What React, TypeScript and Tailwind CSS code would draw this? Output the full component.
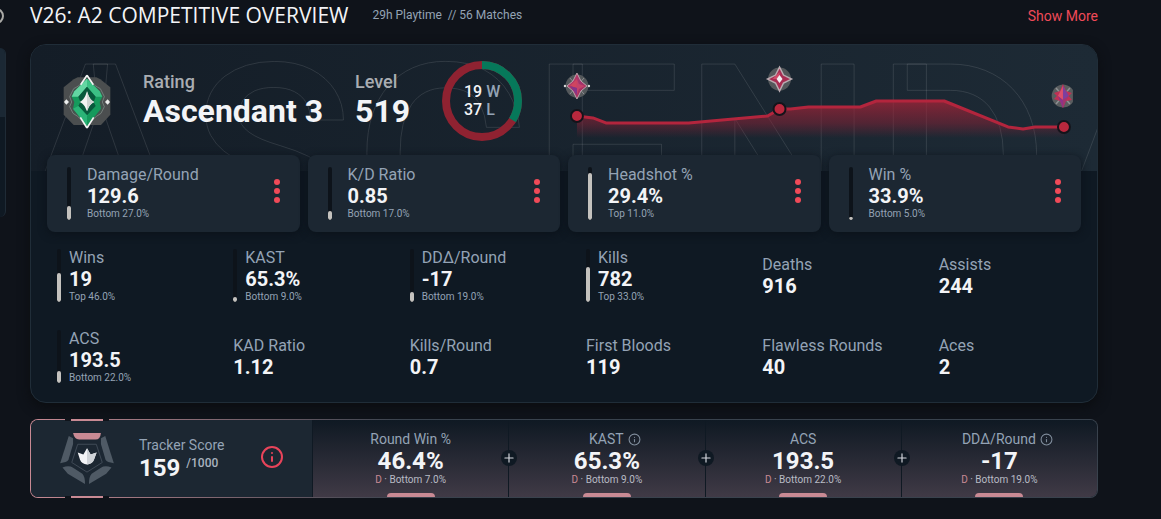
import React from "react";
import { Info, Plus } from "lucide-react";

type Stat = {
  label: string;
  value: string;
  rank?: string;
  percent?: number;
};

const mainStats: Stat[] = [
  { label: "Damage/Round", value: "129.6", rank: "Bottom 27.0%", percent: 27 },
  { label: "K/D Ratio", value: "0.85", rank: "Bottom 17.0%", percent: 17 },
  { label: "Headshot %", value: "29.4%", rank: "Top 11.0%", percent: 89 },
  { label: "Win %", value: "33.9%", rank: "Bottom 5.0%", percent: 5 },
];

const stats: Stat[] = [
  { label: "Wins", value: "19", rank: "Top 46.0%", percent: 54 },
  { label: "KAST", value: "65.3%", rank: "Bottom 9.0%", percent: 9 },
  { label: "DDΔ/Round", value: "-17", rank: "Bottom 19.0%", percent: 19 },
  { label: "Kills", value: "782", rank: "Top 33.0%", percent: 67 },
  { label: "Deaths", value: "916" },
  { label: "Assists", value: "244" },
  { label: "ACS", value: "193.5", rank: "Bottom 22.0%", percent: 22 },
  { label: "KAD Ratio", value: "1.12" },
  { label: "Kills/Round", value: "0.7" },
  { label: "First Bloods", value: "119" },
  { label: "Flawless Rounds", value: "40" },
  { label: "Aces", value: "2" },
];

const scoreParts = [
  { label: "Round Win %", value: "46.4%", rank: "Bottom 7.0%", info: false },
  { label: "KAST", value: "65.3%", rank: "Bottom 9.0%", info: true },
  { label: "ACS", value: "193.5", rank: "Bottom 22.0%", info: false },
  { label: "DDΔ/Round", value: "-17", rank: "Bottom 19.0%", info: true },
];

const RankBar = ({ percent }: { percent: number }) => (
  <div className="flex h-[53px] w-1 shrink-0 flex-col justify-end overflow-hidden rounded-full bg-[#0d131a]">
    <div
      className="w-full rounded-full bg-[#c4c2be]"
      style={{ height: `${percent}%` }}
    />
  </div>
);

const StatText = ({ stat }: { stat: Stat }) => (
  <div className="whitespace-nowrap">
    <div className="text-[16px] leading-[20px] text-[#94a3b5]">{stat.label}</div>
    <div className="text-[20px] leading-[22px] font-bold text-[#f3f4f7]">
      {stat.value}
    </div>
    {stat.rank && (
      <div className="text-[10px] leading-[14px] text-[#94a3b5]">
        {stat.rank}
      </div>
    )}
  </div>
);

const AscendantIcon = () => (
  <svg viewBox="68 51 144 168" className="h-14 w-12 shrink-0">
    <path
      d="M112 64 L168 64 L180 70 L210 94 L210 176 L182 207 L100 207 L70 176 L70 94 L100 70 Z"
      fill="#4b4e4f"
    />
    <path
      d="M140 58 C148 76 160 88 180 98 L192 122 L186 138 L192 152 L182 172 C164 182 150 196 140 216 C130 196 116 182 98 172 L88 152 L94 138 L88 122 L100 98 C120 88 132 76 140 58 Z"
      fill="#45534e"
      stroke="#8c9692"
      strokeWidth="2"
    />
    <path d="M140 68 L178 106 L186 122 L178 138 L182 158 L140 210 L98 158 L102 138 L94 122 L102 106 Z" fill="#159a5c" />
    <path d="M140 68 L102 106 L94 122 L114 122 L140 92 Z" fill="#63d6a2" />
    <path d="M140 68 L178 106 L186 122 L166 122 L140 92 Z" fill="#3cc085" />
    <path d="M140 92 L166 122 L160 138 L166 150 L140 178 L114 150 L120 138 L114 122 Z" fill="#08593c" />
    <path d="M140 210 L98 158 L114 150 L140 178 Z" fill="#2bb377" />
    <path d="M140 106 C146 124 150 132 162 138 C150 144 146 150 140 166 C134 150 130 144 118 138 C130 132 134 124 140 106 Z" fill="#f2f3f2" />
    <path d="M140 106 C146 124 150 132 162 138 C150 144 146 150 140 166 Z" fill="#cfd4d2" />
    <path d="M140 58 L159 86 M140 58 L121 86 M140 216 L160 184 M140 216 L120 184" stroke="#f2f4f3" strokeWidth="5" fill="none" />
    <path d="M78 130 L86 138 L78 146 L71 138 Z M202 130 L209 138 L202 146 L194 138 Z" fill="#eceeed" />
  </svg>
);

const TrackerEmblem = () => (
  <svg viewBox="176 340 168 160" className="h-[53px] w-14 shrink-0">
    <path d="M218 343 H302 Q300 363 286 363 H236 Q222 362 218 343 Z" fill="#c98a94" />
    <g fill="#4f5a65">
      <path d="M205 352 L218 359 V376 L204 424 Q200 432 179 434 Z" />
      <path d="M315 352 L302 359 V376 L316 424 Q320 432 341 434 Z" />
      <path d="M186 447 Q206 440 218 448 L246 466 Q254 474 254 497 L202 466 Z" />
      <path d="M334 447 Q314 440 302 448 L274 466 Q266 474 266 497 L318 466 Z" />
    </g>
    <path d="M232 377 H288 L306 432 L260 461 L214 432 Z" fill="none" stroke="#3f4a56" strokeWidth="3" />
    <path d="M260 389 L271 408 L289 402 L281 424 Q276 437 260 438 Q244 437 239 424 L232 402 L249 408 Z" fill="#f3f4f7" />
    <path d="M260 389 L271 408 L289 402 L281 424 Q276 437 260 438 Z" fill="#cfd3d8" />
  </svg>
);

const WinLossRing = () => (
  <div className="relative flex size-20 shrink-0 items-center justify-center">
    <svg viewBox="0 0 80 80" className="absolute inset-0">
      <circle cx="40" cy="40" r="36" fill="none" stroke="#8f2231" strokeWidth="8" />
      <circle
        cx="40"
        cy="40"
        r="36"
        fill="none"
        stroke="#06785a"
        strokeWidth="8"
        pathLength={100}
        strokeDasharray="33.9 100"
        transform="rotate(-90 40 40)"
      />
    </svg>
    <div className="relative text-[16px] leading-[18px] font-medium text-[#f3f4f7]">
      <div>
        19 <span className="text-[#94a3b5]">W</span>
      </div>
      <div>
        37 <span className="text-[#94a3b5]">L</span>
      </div>
    </div>
  </div>
);

const RatingChart = () => (
  <svg viewBox="0 0 544 112" className="h-28 min-w-0 flex-1">
    <defs>
      <linearGradient id="ratingFill" gradientUnits="userSpaceOnUse" x1="0" y1="56" x2="0" y2="93">
        <stop offset="0" stopColor="#a82438" stopOpacity="0.75" />
        <stop offset="0.6" stopColor="#8a2236" stopOpacity="0.5" />
        <stop offset="1" stopColor="#8a2236" stopOpacity="0" />
      </linearGradient>
      <linearGradient id="gem" x1="0" y1="0" x2="1" y2="1">
        <stop offset="0" stopColor="#d23a58" />
        <stop offset="0.5" stopColor="#a0356f" />
        <stop offset="1" stopColor="#b82b4c" />
      </linearGradient>
    </defs>
    <path
      d="M23 71 L39 73 L52 78 H135 L214 71 L226 64 H237 L255 62 H307 L323 56 H391 L455 82 L470 84 L482 82 H511 V93 H23 Z"
      fill="url(#ratingFill)"
    />
    <path
      d="M23 71 L39 73 L52 78 H135 L214 71 L226 64 H237 L255 62 H307 L323 56 H391 L455 82 L470 84 L482 82 H511"
      fill="none"
      stroke="#b3253d"
      strokeWidth="3"
      strokeLinejoin="round"
    />
    <g fill="#b9283d" stroke="#14131a" strokeWidth="2">
      <circle cx="23" cy="71" r="6" />
      <circle cx="226" cy="64" r="6" />
      <circle cx="511" cy="82" r="6" />
    </g>

    {/* rank markers above the points */}
    <g transform="translate(23 41)">
      <circle r="11.5" fill="#54585b" />
      <path d="M-7 -8 L7 8 M7 -8 L-7 8" stroke="#8d9092" strokeWidth="1" />
      <path d="M0 -13 L4 -5 L10 0 L4 5 L0 13 L-4 5 L-10 0 L-4 -5 Z" fill="url(#gem)" stroke="#b9a3ab" strokeWidth="1" />
      <path d="M0 -7 L2 -2 L8 0 L2 3 L0 9 Z" fill="#c4426a" />
      <path d="M0 -7 L-7 0 L0 2 Z" fill="#cf4560" />
      <path d="M0 9 L-7 0 L0 2 Z" fill="#85348a" />
      <circle cx="-12" r="1.2" fill="#d5d7d8" />
      <circle cx="12" r="1.2" fill="#d5d7d8" />
    </g>
    <g transform="translate(226 34)">
      <circle r="11.5" fill="#54585b" />
      <path d="M0 -12 L4 -4 L12 0 L4 4 L0 12 L-4 4 L-12 0 L-4 -4 Z" fill="#a82c52" stroke="#b9aab0" strokeWidth="1.5" />
      <path d="M0 -7 L-7 0 L0 0 Z" fill="#d14a68" />
      <path d="M0 -4 L3 0 L0 4 L-3 0 Z" fill="#f3eef1" />
    </g>
    <g transform="translate(510 51)">
      <path d="M10 -6 V6 A11.5 11.5 0 1 1 10 -6 Z" fill="#5a5d5f" />
      <path d="M-7 -8 L7 8 M7 -8 L-7 8" stroke="#8d9092" strokeWidth="1.5" />
      <path d="M0 -12 L3 -5 L9 -3 L6 0 L9 4 L3 5 L0 12 L-3 5 L-9 3 L-6 0 L-9 -3 L-3 -5 Z" fill="#c03055" />
      <path d="M0 -10 L6 0 L0 4 Z" fill="#7c3f9e" />
      <path d="M0 4 L6 0 L3 5 L0 12 Z" fill="#a0356f" />
      <path d="M0 -10 L-5 0 L0 4 Z" fill="#dc4f6c" />
      <path d="M0 4 L-5 0 L-3 5 L0 12 Z" fill="#8d3488" />
    </g>
  </svg>
);

const App = () => {
  return (
    <div className="flex min-h-screen items-start overflow-hidden bg-[#0f131a] font-['Roboto',sans-serif]">
      {/* edge of the sidebar */}
      <aside className="w-1.5 shrink-0">
        <div className="flex h-12 items-start overflow-hidden pt-2">
          <div className="-ml-3 size-4 shrink-0 rounded-full border-2 border-[#a9a9a6]" />
        </div>
        <div className="h-[169px] overflow-hidden rounded-r-lg border-r border-[#1f2b36] bg-[#0f1923]">
          <div className="h-[69px] bg-[#1b2834]" />
        </div>
      </aside>

      <main className="mr-[63px] ml-6 min-w-0 flex-1">
        <header className="flex h-11 items-start whitespace-nowrap">
          <h1 className="font-['Open_Sans',sans-serif] text-[21px] leading-[30px] text-[#f3f4f7]">
            V26: A2 COMPETITIVE OVERVIEW
          </h1>
          <span className="ml-6 text-[12px] leading-[30px] whitespace-pre text-[#94a3b5]">
            29h Playtime  // 56 Matches
          </span>
          <a href="#" className="ml-auto text-[14px] leading-[32px] text-[#f04a58]">
            Show More
          </a>
        </header>

        <section className="overflow-hidden rounded-2xl border border-[#202d38] bg-[#0f1923] shadow-[0_4px_12px_#0b0d10]">
          <div className="relative h-[126px] overflow-hidden bg-linear-to-r from-[#141d27] to-[#1d2a35]">
            <div
              aria-hidden="true"
              className="absolute -top-4 -left-5 text-[270px] leading-[270px] font-medium whitespace-nowrap text-transparent [-webkit-text-stroke:1px_#ffffff1c]"
            >
              ASCENDANT
            </div>
            <div className="relative flex h-28 items-center gap-8 pl-8">
              <AscendantIcon />
              <div className="pb-0.5 whitespace-nowrap">
                <div className="text-[18px] leading-[22px] font-medium text-[#a9adb2]">
                  Rating
                </div>
                <div className="text-[32px] leading-[36px] font-bold text-[#f3f4f7]">
                  Ascendant 3
                </div>
              </div>
              <div className="pb-0.5 whitespace-nowrap">
                <div className="text-[18px] leading-[22px] font-medium text-[#a9adb2]">
                  Level
                </div>
                <div className="text-[32px] leading-[36px] font-bold text-[#f3f4f7]">
                  519
                </div>
              </div>
              <WinLossRing />
              <RatingChart />
            </div>
          </div>

          <div className="relative -mt-4 grid grid-cols-4 gap-2 px-4">
            {mainStats.map((stat) => (
              <div
                key={stat.label}
                className="flex h-[77px] items-start gap-4 rounded-lg bg-[#1c2732] py-2.5 pr-5 pl-5 shadow-[0_2px_8px_#0b121a]"
              >
                <div className="pt-0.5">
                  <RankBar percent={stat.percent ?? 0} />
                </div>
                <StatText stat={stat} />
                <button
                  aria-label={`${stat.label} options`}
                  className="ml-auto flex h-[52px] w-1.5 flex-col items-center justify-center gap-[3px]"
                >
                  <span className="size-1.5 rounded-full bg-[#f04a58]" />
                  <span className="size-1.5 rounded-full bg-[#f04a58]" />
                  <span className="size-1.5 rounded-full bg-[#f04a58]" />
                </button>
              </div>
            ))}
          </div>

          <div className="grid grid-cols-6 gap-6 px-4 pt-[15px] pb-[17px]">
            {stats.map((stat) => (
              <div key={stat.label} className="flex h-[57px] items-center gap-2 pl-2.5">
                {stat.percent !== undefined && <RankBar percent={stat.percent} />}
                <StatText stat={stat} />
              </div>
            ))}
          </div>
        </section>

        <section className="relative mt-4 rounded-lg bg-linear-to-r from-[#c98a94] via-[#39424d] via-35% to-[#39424d] p-px">
          <div className="flex h-[77px] overflow-hidden rounded-[7px] bg-[#0f1923]">
            <div className="flex w-[281px] shrink-0 items-center gap-6 bg-[#1c2732] pr-7 pl-7">
              <TrackerEmblem />
              <div className="whitespace-nowrap">
                <div className="text-[14px] leading-[18px] text-[#94a3b5]">Tracker Score</div>
                <div className="flex items-start gap-1.5">
                  <span className="text-[24px] leading-[28px] font-bold text-[#f3f4f7]">159</span>
                  <span className="text-[12px] leading-[18px] font-medium text-[#a9b3bf]">/1000</span>
                </div>
              </div>
              <button aria-label="About Tracker Score" className="ml-auto pb-1 text-[#e8445a]">
                <Info size={24} strokeWidth={2} />
              </button>
            </div>

            <div className="grid flex-1 grid-cols-4 bg-linear-to-b from-[#0f1923] to-[#403a46]">
              {scoreParts.map((part, i) => (
                <div
                  key={part.label}
                  className="relative flex flex-col items-center border-l border-[#0f1923] pt-2.5 whitespace-nowrap"
                >
                  <div className="flex items-center text-[14px] leading-[18px] text-[#94a3b5]">
                    {part.info && <span className="w-4" />}
                    {part.label}
                    {part.info && <Info size={13} className="ml-1 text-[#7f8c9b]" />}
                  </div>
                  <div className="text-[24px] leading-[26px] font-bold text-[#f3f4f7]">
                    {part.value}
                  </div>
                  <div className="text-[10px] leading-[12px] text-[#b9bcc5]">
                    <span className="text-[#c98a94]">D</span> · {part.rank}
                  </div>
                  <div className="mt-auto h-1 w-12 rounded-t-sm bg-[#c98a94]" />
                  {i > 0 && (
                    <span className="absolute top-[30px] -left-2 flex size-4 items-center justify-center rounded-full bg-[#0f1923] text-[#d5d8de]">
                      <Plus size={14} />
                    </span>
                  )}
                </div>
              ))}
            </div>
          </div>
          {/* accents cut into the frame */}
          <span className="absolute top-0 left-[35px] h-0.5 w-11 border-x-6 border-[#0f131a] bg-[#c98a94]" />
          <span className="absolute bottom-0 left-[35px] h-0.5 w-11 border-x-6 border-[#0f131a] bg-[#c98a94]" />
        </section>
      </main>
    </div>
  );
};

export default App;
